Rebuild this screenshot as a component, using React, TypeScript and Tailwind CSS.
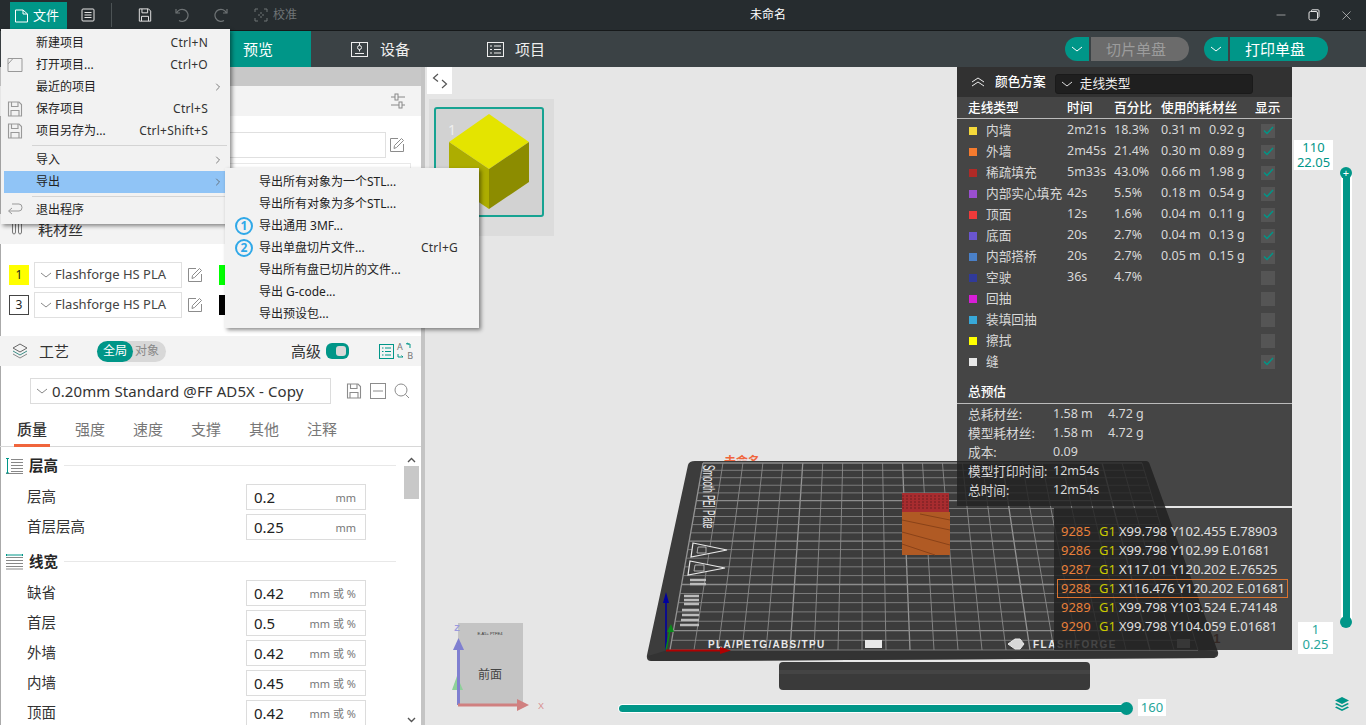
import { ChevronRight, Minus, X } from "lucide-react";

interface IconProps {
  className?: string;
}

function Chevron({ className = "text-[#888]" }: IconProps) {
  return (
    <svg width="12" height="8" viewBox="0 0 12 8" fill="none" stroke="currentColor" className={className}>
      <path d="M1 2 L6 6 L11 2" />
    </svg>
  );
}

function EditIcon() {
  return (
    <svg width="16" height="16" viewBox="0 0 16 16" fill="none" stroke="#8c8c8c">
      <path d="M9 1.5 H1.5 V14.5 H14.5 V7" />
      <path d="M5 11.5 L5.5 8.5 L12.5 1.5 L14.5 3.5 L7.5 10.5 Z" />
    </svg>
  );
}

function SaveIcon({ color = "#8c8c8c", size = 16 }: { color?: string; size?: number }) {
  return (
    <svg width={size} height={size} viewBox="0 0 16 16" fill="none" stroke={color} strokeWidth="1.1">
      <path d="M1.5 1 H12 L14.5 3.5 V15 H1.5 Z" />
      <path d="M4.5 1 V5.5 H11 V1" />
      <path d="M4 15 V9.5 H12 V15" />
    </svg>
  );
}

function TopBar() {
  return (
    <div className="h-[31px] shrink-0 bg-[#262c2f] border-b border-[#16191a] flex items-stretch relative">
      <div className="ml-[10px] mt-[2px] w-[57px] bg-[#009688] flex items-center gap-[5px] pl-[5px] text-white text-[13px]">
        <svg width="13" height="14" viewBox="0 0 13 14" fill="none" stroke="#fff">
          <path d="M.5 1 H8 L12.5 5 V13 H.5 Z" />
          <path d="M8 1 V5 H12.5" />
        </svg>
        文件
      </div>
      <div className="w-[44px] pl-[14px] flex items-center">
        <svg width="14" height="14" viewBox="0 0 14 14" fill="none" stroke="#e6e6e6">
          <rect x="1" y="1" width="12" height="12" rx="1" />
          <path d="M3.5 4.5 H10.5 M3.5 7 H10.5 M3.5 9.5 H10.5" />
        </svg>
      </div>
      <div className="w-px h-[24px] self-center bg-[#4c5355]" />
      <div className="ml-[26px] flex items-center">
        <SaveIcon color="#e6e6e6" size={14} />
      </div>
      <div className="ml-[23px] flex items-center">
        <svg width="14" height="14" viewBox="0 0 14 14" fill="none" stroke="#6f7476" strokeWidth="1.2">
          <path d="M1 1 V5 H5" />
          <path d="M1.5 5 A6 6 0 1 1 4 12.5" />
        </svg>
      </div>
      <div className="ml-[25px] flex items-center">
        <svg width="14" height="14" viewBox="0 0 14 14" fill="none" stroke="#6f7476" strokeWidth="1.2">
          <path d="M13 1 V5 H9" />
          <path d="M12.5 5 A6 6 0 1 0 10 12.5" />
        </svg>
      </div>
      <div className="ml-[26px] flex items-center gap-[5px] text-[#6f7476] text-[12px]">
        <svg width="14" height="14" viewBox="0 0 14 14" fill="none" stroke="#6f7476">
          <path d="M1 4 V1 H4 M10 1 H13 V4 M13 10 V13 H10 M4 13 H1 V10" />
          <path d="M7 4 V6 M7 8 V10 M4 7 H6 M8 7 H10" />
        </svg>
        校准
      </div>
      <div className="absolute left-[750px] top-[7px] text-white text-[12px] leading-[16px]">未命名</div>
      <div className="ml-auto flex items-center text-[#e6e6e6]">
        <div className="w-[33px] flex justify-center">
          <Minus size={14} strokeWidth={1} />
        </div>
        <div className="w-[33px] flex justify-center">
          <svg width="12" height="12" viewBox="0 0 12 12" fill="none" stroke="currentColor">
            <rect x="1" y="2.5" width="8.5" height="8.5" rx="1.5" />
            <path d="M3.5 2.5 V1.5 Q3.5 .8 4.2 .8 H10 Q11 .8 11 1.8 V7.5 Q11 8.5 9.5 8.5" />
          </svg>
        </div>
        <div className="w-[33px] flex justify-center">
          <X size={15} strokeWidth={1} />
        </div>
        <div className="w-[3px]" />
      </div>
    </div>
  );
}

function NavBar() {
  return (
    <div className="h-[36px] shrink-0 bg-[#3b4245] flex items-stretch text-[15px] text-white">
      <div className="ml-[200px] w-[111px] pl-[43px] bg-[#009688] flex items-center">预览</div>
      <div className="ml-[40px] flex items-center gap-[12px] text-[#eee]">
        <svg width="17" height="15" viewBox="0 0 17 15" fill="none" stroke="#eee">
          <rect x=".5" y=".5" width="16" height="14" />
          <circle cx="8.5" cy="5.5" r="2" />
          <path d="M8.5 1 V3.5 M8.5 7.5 V9.5 M4 11.5 H13" />
        </svg>
        设备
      </div>
      <div className="ml-[77px] flex items-center gap-[11px] text-[#eee]">
        <svg width="17" height="15" viewBox="0 0 17 15" fill="none" stroke="#eee">
          <rect x=".5" y=".5" width="16" height="14" />
          <path d="M3 4 H5 M7 4 H14 M3 7.5 H5 M7 7.5 H14 M3 11 H5 M7 11 H14" />
        </svg>
        项目
      </div>
      <div className="ml-auto mr-[38px] flex items-center">
        <div className="w-[24px] h-[24px] rounded-l-full bg-[#009688] flex items-center justify-center">
          <Chevron className="text-white" />
        </div>
        <div className="ml-[2px] w-[98px] h-[24px] pr-[8px] rounded-r-full bg-[#6b6b6b] text-[#9c9c9c] flex items-center justify-center">
          切片单盘
        </div>
        <div className="ml-[15px] w-[24px] h-[24px] rounded-l-full bg-[#009688] flex items-center justify-center">
          <Chevron className="text-white" />
        </div>
        <div className="ml-[2px] w-[98px] h-[24px] pr-[8px] rounded-r-full bg-[#009688] flex items-center justify-center">
          打印单盘
        </div>
      </div>
    </div>
  );
}

function FilamentRow({ num, swatch, numClass }: { num: string; swatch: string; numClass: string }) {
  return (
    <div className="h-[26px] flex items-center">
      <div className={`ml-[9px] w-[20px] h-[20px] flex items-center justify-center text-[12px] text-[#222] ${numClass}`}>{num}</div>
      <div className="ml-[5px] w-[148px] h-[26px] border border-[#e0e0e0] flex items-center gap-[3px] pl-[5px] text-[13px] text-[#444]">
        <Chevron />
        Flashforge HS PLA
      </div>
      <div className="ml-[5px] w-[16px]">
        <EditIcon />
      </div>
      <div className={`ml-[16px] w-[20px] h-[20px] ${swatch}`} />
    </div>
  );
}

const tabs = ["质量", "强度", "速度", "支撑", "其他", "注释"];

function SectionHead({ title, icon, className = "" }: { title: string; icon: React.ReactNode; className?: string }) {
  return (
    <div className={`h-[35px] pt-[2px] flex items-center pl-[6px] pr-[8px] ${className}`}>
      {icon}
      <span className="ml-[6px] text-[14.5px] font-bold text-[#262626]">{title}</span>
      <div className="ml-[6px] flex-1 h-px bg-[#e8e8e8]" />
    </div>
  );
}

function SettingRow({ label, value, unit }: { label: string; value: string; unit: string }) {
  return (
    <div className="h-[30px] flex items-center pl-[27px]">
      <span className="w-[219px] text-[14.5px] text-[#333]">{label}</span>
      <div className="w-[120px] h-[26px] border border-[#dcdcdc] flex items-center px-[7px]">
        <span className="text-[15px] text-[#222]">{value}</span>
        <span className="ml-auto mr-[2px] mt-[3px] text-[11px] text-[#777]">{unit}</span>
      </div>
    </div>
  );
}

function LeftPanel() {
  return (
    <aside className="w-[421px] shrink-0 bg-white flex flex-col overflow-hidden shadow-[inset_1px_0_0_#aaa]">
      <div className="h-[19px] shrink-0 bg-[#c8c8c8]" />
      <div className="h-[30px] shrink-0 bg-[#f3f3f3] flex items-center justify-end pr-[15px]">
        <svg width="16" height="18" viewBox="0 0 16 18" fill="none" stroke="#888">
          <path d="M1 5 H5 M8 5 H15 M1 13 H9 M12 13 H15" />
          <rect x="5" y="2" width="3" height="6" />
          <rect x="9" y="10" width="3" height="6" />
        </svg>
      </div>
      <div className="h-[98px] shrink-0">
        <div className="mt-[16px] flex items-center">
          <div className="ml-[200px] w-[186px] h-[26px] border border-[#e0e0e0]" />
          <div className="ml-[3px]">
            <EditIcon />
          </div>
        </div>
        <div className="mt-[5px] ml-[200px] w-[211px] h-[26px] border border-[#e8e8e8]" />
      </div>
      <div className="h-[30px] shrink-0 bg-[#f3f3f3] flex items-center pl-[11px] gap-[12px] text-[15px] text-[#333]">
        <svg width="15" height="12" viewBox="0 0 15 12" fill="none" stroke="#777">
          <path d="M1.5 1 V9 Q1.5 11 3 11 Q4.5 11 4.5 9 V1 M7.5 1 V9 Q7.5 11 9 11 Q10.5 11 10.5 9 V1" />
        </svg>
        耗材丝
      </div>
      <div className="h-[92px] shrink-0 pt-[18px] flex flex-col gap-[4px]">
        <FilamentRow num="1" numClass="bg-[#ffff00]" swatch="bg-[#00ff00]" />
        <FilamentRow num="3" numClass="border border-[#444] bg-white" swatch="bg-black" />
      </div>
      <div className="h-[30px] shrink-0 bg-[#f3f3f3] flex items-center">
        <svg className="ml-[12px]" width="16" height="16" viewBox="0 0 16 16" fill="none" stroke="#3d8d86">
          <path d="M8 1 L15 5 L8 9 L1 5 Z" stroke="#666" />
          <path d="M1 8 L8 12 L15 8" />
          <path d="M1 11 L8 15 L15 11" stroke="#888" />
        </svg>
        <span className="ml-[11px] text-[15px] text-[#333]">工艺</span>
        <div className="ml-[28px] w-[69px] h-[21px] rounded-full bg-[#d8d8d8] flex items-center text-[12px] text-[#888]">
          <div className="w-[36px] h-[21px] rounded-full bg-[#009688] text-white flex items-center justify-center">全局</div>
          <span className="ml-[2px]">对象</span>
        </div>
        <span className="ml-auto text-[15px] text-[#333]">高级</span>
        <div className="ml-[5px] w-[23px] h-[16px] rounded-[6px] bg-[#009688] flex items-center justify-end pr-[3px]">
          <div className="w-[10px] h-[10px] rounded-[3px] bg-[#d9d9d9]" />
        </div>
        <svg className="ml-[30px]" width="15" height="15" viewBox="0 0 15 15" fill="none" stroke="#009688">
          <rect x=".5" y=".5" width="14" height="14" />
          <path d="M3 4 H4.5 M6 4 H12 M3 7.5 H4.5 M6 7.5 H12 M3 11 H4.5 M6 11 H12" />
        </svg>
        <div className="ml-[3px] mr-[8px] w-[16px] h-[18px] relative text-[9px] leading-[9px] text-[#777]">
          <span className="absolute left-0 top-0">A</span>
          <span className="absolute right-0 bottom-0">B</span>
          <svg className="absolute inset-0" width="16" height="18" viewBox="0 0 16 18" fill="none" stroke="#009688">
            <path d="M9 2 L11 1 L11 3 M11 2 H13 V6 M1 12 V15 H6 M6 15 L4.5 13.5" />
          </svg>
        </div>
      </div>
      <div className="pt-[12px] shrink-0 flex items-center">
        <div className="ml-[30px] w-[301px] h-[26px] border border-[#dcdcdc] flex items-center gap-[4px] pl-[5px] text-[15px] text-[#333] tracking-[0.1px]">
          <Chevron />
          0.20mm Standard @FF AD5X - Copy
        </div>
        <div className="ml-[15px]">
          <SaveIcon />
        </div>
        <svg className="ml-[8px]" width="16" height="16" viewBox="0 0 16 16" fill="none" stroke="#8c8c8c">
          <rect x=".5" y=".5" width="15" height="15" />
          <path d="M3 8 H13" />
        </svg>
        <svg className="ml-[8px]" width="16" height="16" viewBox="0 0 16 16" fill="none" stroke="#8c8c8c">
          <circle cx="7" cy="7" r="6" />
          <path d="M11.5 11.5 L15 15" />
        </svg>
      </div>
      <div className="h-[43px] shrink-0 flex border-b border-[#d8d8d8] pl-[14px] gap-[22px] text-[15px] text-[#777]">
        {tabs.map((tab, i) => (
          <div
            key={tab}
            className={
              i === 0
                ? "w-[36px] h-[43px] pt-[14px] text-center text-[#333] font-medium border-b-[3px] border-[#f0653c]"
                : "w-[36px] h-[43px] pt-[14px] text-center"
            }
          >
            {tab}
          </div>
        ))}
      </div>
      <div className="flex-1 min-h-0 flex overflow-hidden">
        <div className="w-[404px] shrink-0">
          <SectionHead
            title="层高"
            icon={
              <svg width="17" height="16" viewBox="0 0 17 16" fill="none" stroke="#888">
                <path d="M5 1.5 H17 M5 4.5 H17 M5 7.5 H17 M5 10.5 H17 M5 13.5 H17 M0 15.5 H17" />
                <path d="M1.5 0 V15 M0 .5 H3 M0 15 H3" stroke="#009688" />
              </svg>
            }
          />
          <SettingRow label="层高" value="0.2" unit="mm" />
          <SettingRow label="首层层高" value="0.25" unit="mm" />
          <SectionHead
            title="线宽"
            className="mt-px"
            icon={
              <svg width="17" height="16" viewBox="0 0 17 16" fill="none" stroke="#888">
                <path d="M0 3.5 H17 M0 6.5 H17 M0 9.5 H17 M0 12.5 H17 M0 15 H17" />
                <path d="M.5 0 V2 M16.5 0 V2 M0 1 H17" stroke="#009688" />
              </svg>
            }
          />
          <SettingRow label="缺省" value="0.42" unit="mm 或 %" />
          <SettingRow label="首层" value="0.5" unit="mm 或 %" />
          <SettingRow label="外墙" value="0.42" unit="mm 或 %" />
          <SettingRow label="内墙" value="0.45" unit="mm 或 %" />
          <SettingRow label="顶面" value="0.42" unit="mm 或 %" />
        </div>
        <div className="w-[15px] mt-[6px] flex flex-col items-center text-[#555]">
          <svg className="mt-[4px]" width="9" height="6" viewBox="0 0 9 6" fill="none" stroke="currentColor" strokeWidth="1.4">
            <path d="M1 5 L4.5 1.5 L8 5" />
          </svg>
          <div className="mt-[3px] w-[15px] h-[33px] bg-[#c8c8c8]" />
          <svg className="mt-auto mb-[2px]" width="9" height="6" viewBox="0 0 9 6" fill="none" stroke="currentColor" strokeWidth="1.4">
            <path d="M1 1 L4.5 4.5 L8 1" />
          </svg>
        </div>
      </div>
    </aside>
  );
}

function BedScene() {
  const verticals = Array.from({ length: 23 }, (_, i) => i);
  let y = 463;
  const rows = Array.from({ length: 23 }, (_, i) => {
    const cur = y;
    y += 7.3 + (2.4 * i) / 21;
    return { i, y: cur };
  });
  const font = "'Liberation Sans', sans-serif";
  return (
    <svg className="absolute left-[215px] top-[383px]" width="600" height="260" viewBox="640 450 600 260">
      <text x="724" y="466" fontSize="12" fontWeight="bold" fill="#f0653c" fontFamily="'Noto Sans CJK SC', sans-serif">未命名</text>
      <text x="1206" y="643" fontSize="13" fontWeight="bold" fill="#8a4a33" fontFamily={font}>01</text>
      <path d="M695 461 H1146 Q1149 461 1150 465 L1218 652 Q1219 657 1214 658 L651 661 Q646 661 647 655 L688 465 Q689 461 695 461 Z" fill="#3c3c3c" />
      <path d="M648 656 L651 661 L1214 658 L1218 652 L1204 650 L668 650 Z" fill="#333" />
      {verticals.map((i) => {
        const top = 703 + (i * 439) / 22;
        const bottom = 670 + (i * 528) / 22;
        return (
          <line key={i} x1={top} y1="463" x2={bottom} y2="650" stroke="#949494" strokeWidth={i % 5 === 0 ? 1.3 : 0.8} />
        );
      })}
      {rows.map((r) => {
        const t = (r.y - 463) / 187;
        return (
          <line
            key={r.i}
            x1={703 - 33 * t}
            y1={r.y}
            x2={1142 + 56 * t}
            y2={r.y}
            stroke="#8c8c8c"
            strokeWidth={r.i % 5 === 0 ? 1.3 : 0.8}
          />
        );
      })}
      <text x="0" y="0" fontSize="11" fill="#e8e8e8" fontFamily={font} transform="translate(703 465) rotate(90) scale(.73 1.5)">Smooth PEI Plate</text>
      <path d="M693 543 L727 550 L691 557 Z M690 561 L725 568 L688 575 Z" fill="#3c3c3c" stroke="#e8e8e8" strokeWidth="1.2" />
      <path d="M698 547 H706 V553 H697 Z M695 565 H704 V571 H694 Z" fill="none" stroke="#ccc" strokeWidth="0.8" />
      <path d="M690 580 H706 M690 584 H706 M684 596 H699 M684 600 H699 M684 604 H699 M682 610 H699 M682 615 H699 M681 620 H699 M680 625 H699" stroke="#bbb" strokeWidth="2.4" />
      <text x="708" y="648" fontSize="10" fontWeight="bold" letterSpacing="1.3" fill="#e8e8e8" fontFamily={font}>PLA/PETG/ABS/TPU</text>
      <rect x="865" y="640" width="17" height="8" fill="#e8e8e8" />
      <path d="M1008 644 L1015 639 H1020 L1024 644 L1020 649 H1015 Z" fill="#d8d8d8" stroke="#e8e8e8" strokeWidth="1" />
      <text x="1033" y="648" fontSize="10" fontWeight="bold" letterSpacing="1.5" fill="#e8e8e8" fontFamily={font}>FLASHFORGE</text>
      <rect x="1177" y="639" width="13" height="9" fill="#999" />
      <rect x="779" y="662" width="311" height="28" rx="4" fill="#3a3a3a" />
      <rect x="779" y="670" width="311" height="4" fill="#444" />
      <rect x="902" y="512" width="48" height="43" fill="#b05a24" />
      <path d="M902 520 L950 530 M902 532 L950 545 M902 544 L935 555 M920 514 L950 520" stroke="#8a4218" strokeWidth="1" />
      <rect x="902" y="493" width="47" height="19" fill="#a82c2f" />
      <path d="M902 496 H949 M902 499 H949 M902 502 H949 M902 505 H949 M902 508 H949" stroke="#6e1f22" strokeWidth="1" strokeDasharray="2 2" />
      <line x1="666" y1="650" x2="666" y2="600" stroke="#0000a0" strokeWidth="1.6" />
      <path d="M666 592 L669 603 H663 Z" fill="#0000a0" />
      <line x1="666" y1="650" x2="670" y2="630" stroke="#0a8a1a" strokeWidth="1.4" />
      <path d="M671 624 L674 632 H667 Z" fill="#0a8a1a" />
      <line x1="666" y1="650.5" x2="722" y2="650.5" stroke="#b00000" strokeWidth="1.8" />
      <path d="M731 650.5 L720 654 V647 Z" fill="#b00000" />
    </svg>
  );
}

function Gizmo() {
  return (
    <svg className="absolute left-[25px] top-[550px]" width="130" height="108" viewBox="450 617 130 108">
      <rect x="458" y="623" width="65" height="82" fill="#c4c4c4" />
      <text x="490" y="679" textAnchor="middle" fontSize="12" fill="#444" fontFamily="'Noto Sans CJK SC', sans-serif">前面</text>
      <text x="490" y="635" textAnchor="middle" fontSize="4" fill="#333" fontFamily="'Liberation Sans', sans-serif">E-A5+ PTFE4</text>
      <path d="M452 690 L463 690 L457 676 Z" fill="#8fd09a" />
      <line x1="458.5" y1="705" x2="458.5" y2="645" stroke="#7f7fd0" strokeWidth="3" />
      <path d="M458.5 638 L464 650 H453 Z" fill="#7f7fd0" />
      <line x1="458" y1="705" x2="520" y2="705" stroke="#d08080" strokeWidth="3" />
      <path d="M529 705 L517 699 V711 Z" fill="#d08080" />
      <text x="457" y="631" textAnchor="middle" fontSize="9" fontWeight="bold" fill="#9a9ade" fontFamily="'Liberation Sans', sans-serif">Z</text>
      <text x="541" y="709" textAnchor="middle" fontSize="9" fill="#d89090" fontFamily="'Liberation Sans', sans-serif">X</text>
    </svg>
  );
}

const lineTypes = [
  { name: "内墙", color: "#f5d93a", time: "2m21s", pct: "18.3%", m: "0.31 m", g: "0.92 g", on: true },
  { name: "外墙", color: "#f57b2e", time: "2m45s", pct: "21.4%", m: "0.30 m", g: "0.89 g", on: true },
  { name: "稀疏填充", color: "#b02a26", time: "5m33s", pct: "43.0%", m: "0.66 m", g: "1.98 g", on: true },
  { name: "内部实心填充", color: "#9a4fd0", time: "42s", pct: "5.5%", m: "0.18 m", g: "0.54 g", on: true },
  { name: "顶面", color: "#f03a3a", time: "12s", pct: "1.6%", m: "0.04 m", g: "0.11 g", on: true },
  { name: "底面", color: "#6a55d0", time: "20s", pct: "2.7%", m: "0.04 m", g: "0.13 g", on: true },
  { name: "内部搭桥", color: "#4a80c8", time: "20s", pct: "2.7%", m: "0.05 m", g: "0.15 g", on: true },
  { name: "空驶", color: "#303a9a", time: "36s", pct: "4.7%", m: "", g: "", on: false },
  { name: "回抽", color: "#d81ed8", time: "", pct: "", m: "", g: "", on: false },
  { name: "装填回抽", color: "#38a8d8", time: "", pct: "", m: "", g: "", on: false },
  { name: "擦拭", color: "#ffff00", time: "", pct: "", m: "", g: "", on: false },
  { name: "缝", color: "#e8e8e8", time: "", pct: "", m: "", g: "", on: true },
];

const estimates = [
  { label: "总耗材丝:", a: "1.58 m", b: "4.72 g" },
  { label: "模型耗材丝:", a: "1.58 m", b: "4.72 g" },
  { label: "成本:", a: "0.09", b: "" },
  { label: "模型打印时间:", a: "12m54s", b: "" },
  { label: "总时间:", a: "12m54s", b: "" },
];

const gcodeLines = [
  { n: "9285", text: "X99.798 Y102.455 E.78903" },
  { n: "9286", text: "X99.798 Y102.99 E.01681" },
  { n: "9287", text: "X117.01 Y120.202 E.76525" },
  { n: "9288", text: "X116.476 Y120.202 E.01681", active: true },
  { n: "9289", text: "X99.798 Y103.524 E.74148" },
  { n: "9290", text: "X99.798 Y104.059 E.01681" },
];

function LegendPanel() {
  return (
    <div className="absolute left-[532px] top-0 w-[335px] h-[439px] bg-[rgba(33,33,33,0.82)] text-[12.5px] text-[#d8d8d8]">
      <div className="h-[30px] bg-[rgba(25,25,25,0.45)] flex items-center text-white">
        <svg className="ml-[14px]" width="14" height="10" viewBox="0 0 14 10" fill="none" stroke="#eee">
          <path d="M1 5 L7 1 L13 5 M1 9 L7 5 L13 9" />
        </svg>
        <span className="ml-[10px] font-medium text-[12.7px]">颜色方案</span>
        <div className="ml-[9px] w-[198px] h-[20px] mt-[3px] rounded-[3px] border border-[#1a1a1a] bg-[#1f1f1f] flex items-center pl-[5px] gap-[7px] text-[12.7px] text-[#eee]">
          <Chevron className="text-[#ddd]" />
          走线类型
        </div>
      </div>
      <div className="h-[22px] border-b border-[#bbb] flex items-center font-medium text-[12.7px] text-white pl-[11px]">
        <span className="w-[99px]">走线类型</span>
        <span className="w-[47px]">时间</span>
        <span className="w-[47px]">百分比</span>
        <span className="w-[94px]">使用的耗材丝</span>
        <span>显示</span>
      </div>
      <div className="pt-[1px]">
        {lineTypes.map((row) => (
          <div key={row.name} className="h-[21px] flex items-center">
            <div className="ml-[12px] w-[8px] h-[8px]" style={{ backgroundColor: row.color }} />
            <span className="ml-[9px] w-[81px] whitespace-nowrap text-[12.7px]">{row.name}</span>
            <span className="w-[47px]">{row.time}</span>
            <span className="w-[47px]">{row.pct}</span>
            <span className="w-[48px]">{row.m}</span>
            <span className="w-[52px]">{row.g}</span>
            <div className="w-[14px] h-[14px] bg-[#555] flex items-center justify-center">
              {row.on && (
                <svg width="11" height="9" viewBox="0 0 11 9" fill="none" stroke="#009688" strokeWidth="1.5">
                  <path d="M1 4.5 L4 7.5 L10 1" />
                </svg>
              )}
            </div>
          </div>
        ))}
      </div>
      <div className="mt-[8px] h-[24px] border-b border-[#bbb] pl-[11px] font-medium text-[12.7px] text-white flex items-center">总预估</div>
      <div className="pt-[1px]">
        {estimates.map((row) => (
          <div key={row.label} className="h-[19px] flex items-center pl-[11px]">
            <span className="w-[85px] whitespace-nowrap text-[12.7px]">{row.label}</span>
            <span className="w-[55px]">{row.a}</span>
            <span>{row.b}</span>
          </div>
        ))}
      </div>
    </div>
  );
}

function GcodePanel() {
  return (
    <div className="absolute left-[629px] top-[441px] w-[238px] h-[142px] bg-[rgba(33,33,33,0.82)] pt-[14px] text-[13px] text-[#e0e0e0]">
      {gcodeLines.map((line) => (
        <div
          key={line.n}
          className={
            line.active
              ? "h-[19px] ml-[3px] mr-[4px] pl-[3px] flex items-center whitespace-nowrap border border-[#d9722e]"
              : "h-[19px] ml-[3px] mr-[4px] pl-[3px] flex items-center whitespace-nowrap border border-transparent"
          }
        >
          <span className="w-[38px] text-[#e8803a]">{line.n}</span>
          <span className="w-[20px] text-[#c8c800]">G1</span>
          <span>{line.text}</span>
        </div>
      ))}
    </div>
  );
}

function Sliders() {
  return (
    <>
      <div className="absolute left-[869px] top-[73px] w-[39px] h-[30px] bg-white text-[13px] text-center text-[#009688] flex flex-col">
        <span className="h-[15px] leading-[15px]">110</span>
        <span className="h-[15px] leading-[15px]">22.05</span>
      </div>
      <div className="absolute left-[916px] top-[105px] w-[11px] h-[451px] bg-white flex justify-center">
        <div className="w-[7px] h-full bg-[#009688]" />
      </div>
      <div className="absolute left-[915px] top-[100px] w-[12px] h-[12px] rounded-full bg-[#009688] text-white text-[11px] leading-[12px] text-center">+</div>
      <div className="absolute left-[915px] top-[549px] w-[12px] h-[12px] rounded-full bg-[#009688]" />
      <div className="absolute left-[873px] top-[555px] w-[35px] h-[32px] bg-white text-[13px] text-center text-[#26a69a] flex flex-col">
        <span className="h-[15px] leading-[15px]">1</span>
        <span className="h-[15px] leading-[15px]">0.25</span>
      </div>
      <div className="absolute left-[193px] top-[637px] w-[508px] h-[9px] bg-white rounded-full flex items-center px-px">
        <div className="w-full h-[7px] rounded-full bg-[#009688]" />
      </div>
      <div className="absolute left-[695px] top-[635px] w-[13px] h-[13px] rounded-full bg-[#009688]" />
      <div className="absolute left-[713px] top-[632px] w-[28px] h-[17px] bg-white text-[13px] leading-[17px] text-center text-[#26a69a]">160</div>
      <svg className="absolute left-[909px] top-[629px]" width="16" height="16" viewBox="0 0 16 16" fill="#009688">
        <path d="M8 1 L15 4.5 L8 8 L1 4.5 Z" />
        <path d="M2.5 7 L8 9.8 L13.5 7 L15 8 L8 11.5 L1 8 Z" />
        <path d="M2.5 10.5 L8 13.3 L13.5 10.5 L15 11.5 L8 15 L1 11.5 Z" />
      </svg>
    </>
  );
}

function Canvas() {
  return (
    <main className="relative flex-1 bg-[#e6e6e6] overflow-hidden">
      <BedScene />
      <Gizmo />
      <div className="absolute left-[2px] top-0 w-[25px] h-[27px] bg-white flex items-center justify-center">
        <svg width="16" height="16" viewBox="0 0 16 16" fill="none" stroke="#555" strokeWidth="1.2">
          <path d="M6 1 L1.5 5 L6 8.5" />
          <path d="M10 7 L14.5 11 L10 15" />
        </svg>
      </div>
      <div className="absolute left-[4px] top-[32px] w-[125px] h-[137px] bg-[#dcdcdc]">
        <div className="ml-[5px] mt-[8px] w-[110px] h-[110px] rounded-[3px] border-2 border-[#17a392] bg-[#d2d2d2] relative">
          <span className="absolute left-[12px] top-[10px] text-[14px] text-[#efefef]">1</span>
          <svg className="absolute left-[12px] top-[4px]" width="82" height="98" viewBox="0 0 82 98">
            <path d="M41 1 L81 29 L41 56 L1 29 Z" fill="#e4e400" />
            <path d="M1 29 L41 56 V96 L1 69 Z" fill="#adad00" />
            <path d="M81 29 L41 56 V96 L81 69 Z" fill="#8c8c00" />
          </svg>
        </div>
      </div>
      <LegendPanel />
      <GcodePanel />
      <Sliders />
    </main>
  );
}

const mainItems = [
  { label: "新建项目", shortcut: "Ctrl+N" },
  { label: "打开项目...", shortcut: "Ctrl+O", icon: "open" },
  { label: "最近的项目", arrow: true },
  { label: "保存项目", shortcut: "Ctrl+S", icon: "save" },
  { label: "项目另存为...", shortcut: "Ctrl+Shift+S", icon: "save" },
];

function MenuIcon({ kind }: { kind?: string }) {
  if (kind === "save") return <SaveIcon color="#999" />;
  if (kind === "open") {
    return (
      <svg width="16" height="16" viewBox="0 0 16 16" fill="none" stroke="#999">
        <path d="M1 1.5 H15 V14.5 H1 Z" />
        <path d="M1 7 L6 1.5" />
      </svg>
    );
  }
  return null;
}

function MenuRow({ label, shortcut, arrow, icon, active }: { label: string; shortcut?: string; arrow?: boolean; icon?: string; active?: boolean }) {
  return (
    <div className={active ? "h-[22px] mx-[3px] bg-[#90c4f6] flex items-center" : "h-[22px] mx-[3px] flex items-center"}>
      <div className="w-[32px] pl-[3px] flex items-center">
        <MenuIcon kind={icon} />
      </div>
      <span className="text-[12px] text-[#222]">{label}</span>
      {shortcut && <span className="ml-auto mr-[19px] text-[12px] text-[#333] tracking-[0.25px]">{shortcut}</span>}
      {arrow && <ChevronRight className="ml-auto mr-[3px] text-[#555]" size={12} strokeWidth={1.5} />}
    </div>
  );
}

const subItems = [
  { label: "导出所有对象为一个STL..." },
  { label: "导出所有对象为多个STL..." },
  { label: "导出通用 3MF...", badge: "1" },
  { label: "导出单盘切片文件...", shortcut: "Ctrl+G", badge: "2" },
  { label: "导出所有盘已切片的文件..." },
  { label: "导出 G-code..." },
  { label: "导出预设包..." },
];

function FileMenu() {
  return (
    <div className="absolute left-[1px] top-[29px] w-[229px] h-[195px] pt-[3px] bg-[#f2f2f2] shadow-[2px_2px_4px_rgba(0,0,0,0.45)]">
      {mainItems.map((item) => (
        <MenuRow key={item.label} {...item} />
      ))}
      <div className="ml-[31px] mr-[3px] my-[3px] h-px bg-[#d4d4d4]" />
      <MenuRow label="导入" arrow />
      <MenuRow label="导出" arrow active />
      <div className="ml-[31px] mr-[3px] mt-[3px] mb-[2px] h-px bg-[#d4d4d4]" />
      <MenuRow label="退出程序" />
      <svg className="absolute left-[6px] top-[174px]" width="16" height="15" viewBox="0 0 16 15" fill="none" stroke="#999">
        <path d="M5 1 H12 Q15 1 15 4.5 Q15 8 12 8 H2" />
        <path d="M5 5 L1.5 8 L5 11" />
      </svg>
    </div>
  );
}

function ExportMenu() {
  return (
    <div className="absolute left-[225px] top-[168px] w-[254px] h-[160px] pt-[3px] bg-[#f2f2f2] shadow-[2px_2px_4px_rgba(0,0,0,0.45)]">
      {subItems.map((item) => (
        <div key={item.label} className="h-[22px] flex items-center">
          <div className="w-[34px] pl-[10px]">
            {item.badge && (
              <div className="w-[18px] h-[18px] rounded-full border-2 border-[#2fa8e8] text-[#2fa8e8] text-[12px] font-bold leading-[14px] text-center">
                {item.badge}
              </div>
            )}
          </div>
          <span className="text-[12px] text-[#222]">{item.label}</span>
          {item.shortcut && <span className="ml-auto mr-[21px] text-[12px] text-[#333] tracking-[0.25px]">{item.shortcut}</span>}
        </div>
      ))}
    </div>
  );
}

export default function App() {
  return (
    <div className="relative w-[1366px] h-[725px] overflow-hidden flex flex-col bg-[#e6e6e6] font-['Noto_Sans','Noto_Sans_CJK_SC',sans-serif]">
      <TopBar />
      <NavBar />
      <div className="flex-1 min-h-0 flex">
        <LeftPanel />
        <div className="w-[4px] shrink-0 bg-[#c4c4c4]" />
        <Canvas />
      </div>
      <FileMenu />
      <ExportMenu />
    </div>
  );
}
